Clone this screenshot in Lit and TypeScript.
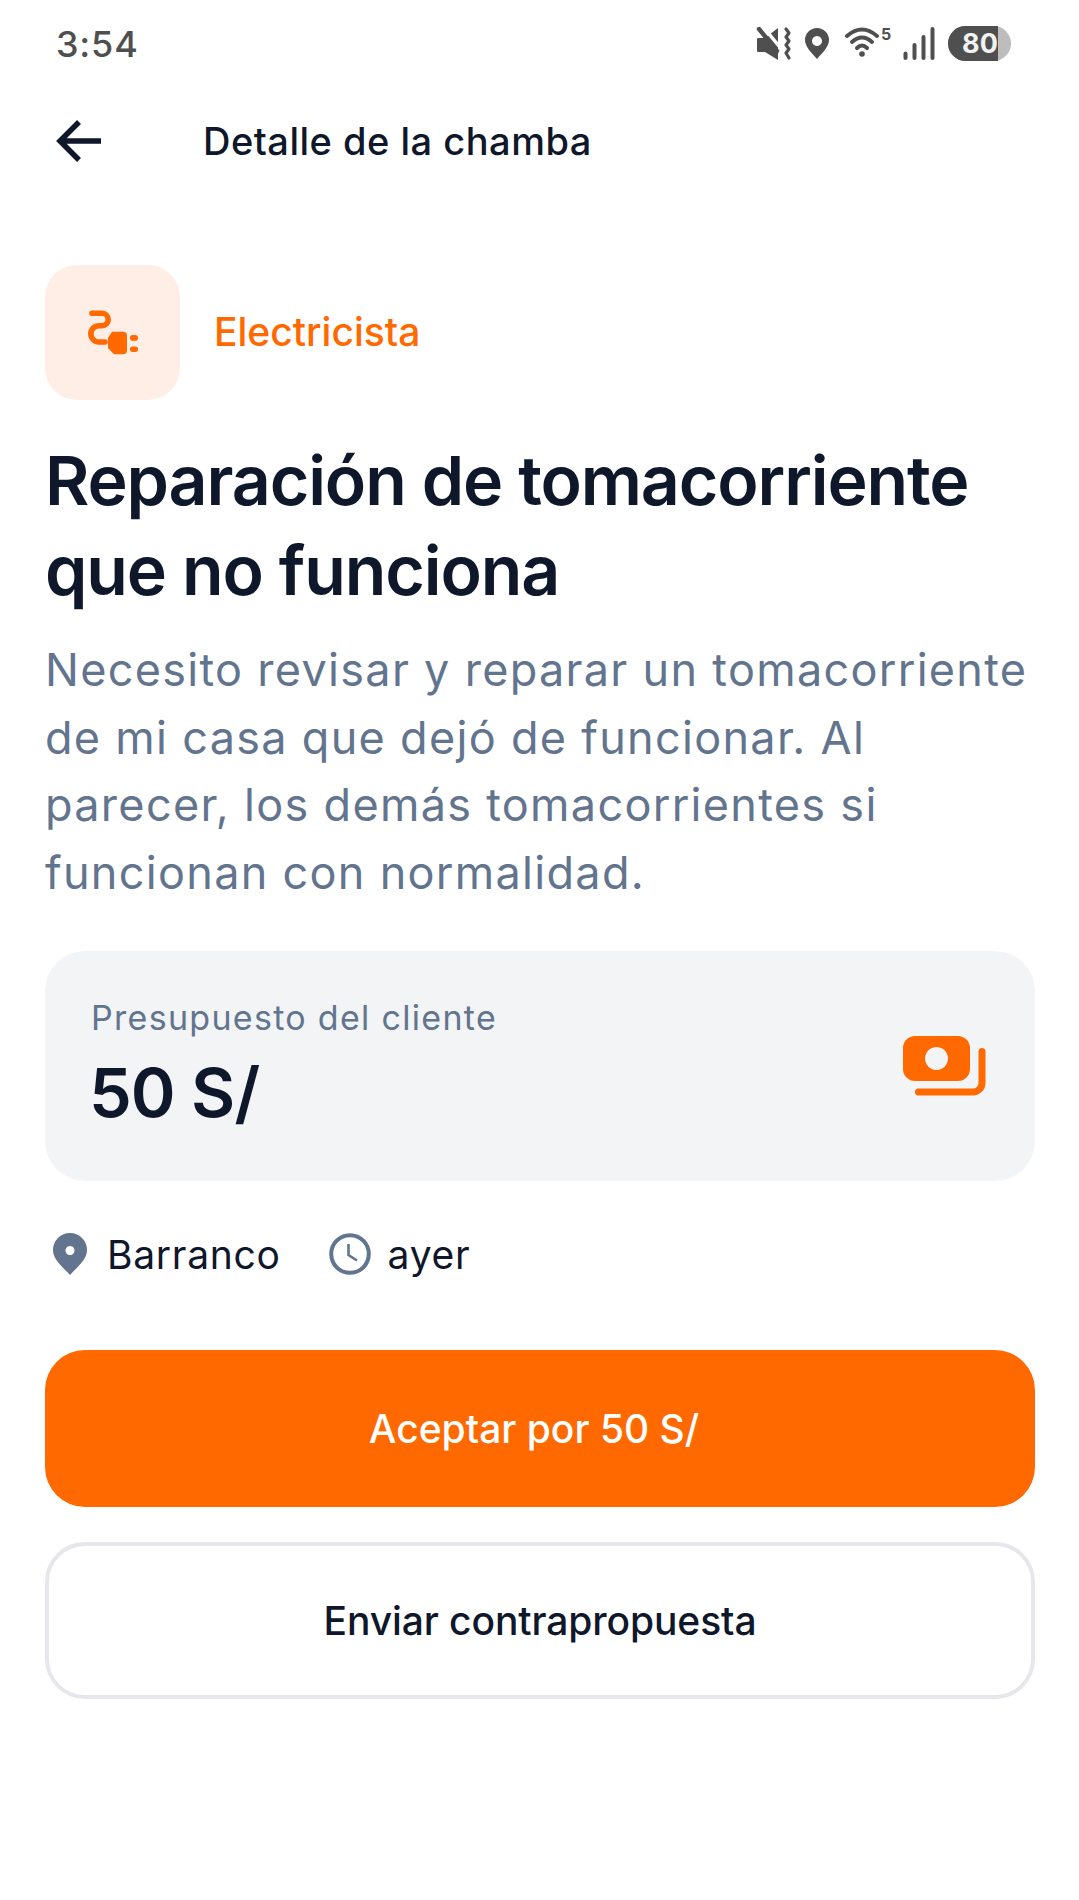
import { LitElement, html, css } from 'lit';
import { customElement } from 'lit/decorators.js';

const ORANGE = '#ff6900';
const SLATE = '#62748e';
const GREY = '#4f4f4f';

@customElement('app-root')
export class AppRoot extends LitElement {
  static styles = css`
    :host {
      display: block;
      width: 1079px;
      height: 1900px;
      background: #fff;
      font-family: Inter, "Liberation Sans", sans-serif;
      color: #0f172b;
      overflow: hidden;
    }
    svg { display: block; flex: none; }
    .status {
      display: flex;
      align-items: center;
      justify-content: space-between;
      height: 44px;
      padding: 22px 68px 0 56px;
      color: #4f4f4f;
    }
    .time { font-size: 36px; font-weight: 500; letter-spacing: 0.8px; }
    .appbar {
      display: flex;
      align-items: center;
      height: 70px;
      margin-top: 40px;
      padding-left: 56px;
    }
    .appbar h1 {
      margin: 0 0 0 101px;
      font-size: 38px;
      font-weight: 500;
      letter-spacing: 0.5px;
      line-height: 46px;
    }
    .content { padding: 89px 31px 0 45px; }
    .category { display: flex; align-items: center; gap: 34px; }
    .category-icon {
      width: 135px;
      height: 135px;
      border-radius: 32px;
      background: #ffeee5;
      display: flex;
      align-items: center;
      justify-content: center;
    }
    .category-name { color: #ff6900; font-size: 39px; font-weight: 500; padding-bottom: 2px; }
    h2 {
      margin: 35px 0 0;
      font-size: 68px;
      font-weight: 600;
      letter-spacing: -1.1px;
      line-height: 90px;
    }
    .desc {
      margin: 21px 0 0;
      font-size: 45px;
      line-height: 67.5px;
      letter-spacing: 1.3px;
      color: #62748e;
    }
    .budget {
      display: flex;
      align-items: center;
      justify-content: space-between;
      height: 230px;
      box-sizing: border-box;
      width: 990px;
      margin-top: 45px;
      padding: 0 48px 0 46px;
      border-radius: 40px;
      background: #f2f4f6;
    }
    .budget-text { padding-bottom: 3px; }
    .budget-label { font-size: 34px; letter-spacing: 1.3px; color: #62748e; }
    .budget-value {
      font-size: 68px;
      font-weight: 600;
      letter-spacing: -0.9px;
      line-height: 80px;
      margin: 14px 0 0 -2px;
    }
    .meta {
      display: flex;
      align-items: center;
      margin-top: 43px;
      padding-left: 8px;
      font-size: 39px;
      letter-spacing: 0.7px;
      height: 60px;
    }
    .meta-item { display: flex; align-items: center; }
    .meta-item + .meta-item { margin-left: 48px; }
    .pin { margin-right: 20px; }
    .clock { margin-right: 17px; }
    .actions {
      display: flex;
      flex-direction: column;
      gap: 35px;
      width: 990px;
      margin-top: 66px;
    }
    .btn {
      display: flex;
      align-items: center;
      justify-content: center;
      height: 157px;
      box-sizing: border-box;
      border-radius: 40px;
      font-size: 39px;
      font-weight: 500;
    }
    .btn.primary { background: #ff6900; color: #fff; padding-right: 12px; }
    .btn.secondary { border: 4px solid #e5e7eb; background: #fff; letter-spacing: -0.1px; }
  `;

  private statusIcons() {
    return html`<svg width="255" height="40" viewBox="0 0 255 40">
      <!-- muted + vibrate -->
      <path d="M1 15 Q1 14 2 14 H9 L22 4 V36 L9 28 H2 Q1 28 1 27z" fill="${GREY}"/>
      <path d="M6.5 2 L25 24.5" stroke="#fff" stroke-width="3.5"/>
      <path d="M3 5 L21 27" stroke="${GREY}" stroke-width="4.4" stroke-linecap="round"/>
      <path d="M30 5 L33 9 L30 13 L33 17 L30 21 L33 25 L30 29 L33 34" fill="none" stroke="${GREY}" stroke-width="3.2" stroke-linecap="round" stroke-linejoin="round"/>
      <!-- location -->
      <path fill-rule="evenodd" d="M61 35 C56 29 49 23 49 16 a12 12 0 0 1 24 0 C73 23 66 29 61 35z M61 12 a5 5 0 1 0 0.01 0z" fill="${GREY}"/>
      <!-- wifi -->
      <path d="M91 12 Q106 -1 121 12" fill="none" stroke="${GREY}" stroke-width="4" stroke-linecap="round"/>
      <path d="M96 18 Q106 9 116 18" fill="none" stroke="${GREY}" stroke-width="4" stroke-linecap="round"/>
      <path d="M101 24 Q106 19 111 24" fill="none" stroke="${GREY}" stroke-width="4" stroke-linecap="round"/>
      <circle cx="106" cy="30" r="2.8" fill="${GREY}"/>
      <text x="125" y="16" font-size="16" font-weight="700" fill="${GREY}" font-family="Inter, sans-serif">5</text>
      <!-- signal -->
      <rect x="147.5" y="27.5" width="4" height="8.5" rx="2" fill="${GREY}"/>
      <rect x="156.5" y="19" width="4" height="17" rx="2" fill="${GREY}"/>
      <rect x="165.5" y="11" width="4" height="25" rx="2" fill="${GREY}"/>
      <rect x="174.5" y="3" width="4" height="33" rx="2" fill="${GREY}"/>
      <!-- battery -->
      <rect x="192" y="2" width="63" height="35" rx="17.5" fill="#bdbdbd"/>
      <path d="M209.5 2 H242 V37 H209.5 A17.5 17.5 0 0 1 209.5 2z" fill="${GREY}"/>
      <text x="224" y="28.5" text-anchor="middle" font-size="27" font-weight="700" fill="#f2f2f2" font-family="Inter, sans-serif">80</text>
    </svg>`;
  }

  render() {
    return html`
      <div class="status">
        <span class="time">3:54</span>
        ${this.statusIcons()}
      </div>
      <div class="appbar">
        <svg width="46" height="46" viewBox="0 0 46 46" fill="none" stroke="#0f172b" stroke-width="5.5">
          <path d="M45 23 H4 M23 4 L4 23 L23 42"/>
        </svg>
        <h1>Detalle de la chamba</h1>
      </div>
      <div class="content">
        <div class="category">
          <div class="category-icon">
            <svg width="52" height="45" viewBox="0 0 52 45">
              <path d="M5 3.3 H15 A6.2 6.2 0 0 1 15 15.7 H12 A8 8 0 0 0 12 32 H18" fill="none" stroke="${ORANGE}" stroke-width="5.6" stroke-linecap="round"/>
              <path d="M25 21.7 H36 A4 4 0 0 1 40 25.7 V40.3 A4 4 0 0 1 36 44.3 H27 L21 38 V28z" fill="${ORANGE}"/>
              <rect x="43" y="25" width="8" height="5.7" rx="2.8" fill="${ORANGE}"/>
              <rect x="43" y="36.5" width="8" height="5.4" rx="2.7" fill="${ORANGE}"/>
            </svg>
          </div>
          <div class="category-name">Electricista</div>
        </div>
        <h2>Reparación de tomacorriente que no funciona</h2>
        <p class="desc">Necesito revisar y reparar un tomacorriente de mi casa que dejó de funcionar. Al parecer, los demás tomacorrientes si funcionan con normalidad.</p>
        <div class="budget">
          <div class="budget-text">
            <div class="budget-label">Presupuesto del cliente</div>
            <div class="budget-value">50 S/</div>
          </div>
          <svg width="84" height="60" viewBox="0 0 84 60">
            <path fill-rule="evenodd" d="M12 0 H55 A12 12 0 0 1 67 12 V33 A12 12 0 0 1 55 45 H12 A12 12 0 0 1 0 33 V12 A12 12 0 0 1 12 0z M33.5 11 a11.5 11.5 0 1 0 0.01 0z" fill="${ORANGE}"/>
            <path d="M79 15.5 V47 A9 9 0 0 1 70 56 H15.5" fill="none" stroke="${ORANGE}" stroke-width="7" stroke-linecap="round"/>
          </svg>
        </div>
        <div class="meta">
          <div class="meta-item">
            <svg class="pin" width="34" height="42" viewBox="0 0 34 42">
              <path fill-rule="evenodd" d="M17 42 C10 34 0 27 0 17 a17 17 0 0 1 34 0 C34 27 24 34 17 42z M17 13 a4.5 4.5 0 1 0 0.01 0z" fill="${SLATE}"/>
            </svg>
            <span>Barranco</span>
          </div>
          <div class="meta-item">
            <svg class="clock" width="42" height="42" viewBox="0 0 42 42" fill="none" stroke="${SLATE}">
              <circle cx="21" cy="21" r="18.8" stroke-width="4"/>
              <path d="M19.5 11 V22 L28 27.5" stroke-width="2.6"/>
            </svg>
            <span>ayer</span>
          </div>
        </div>
        <div class="actions">
          <div class="btn primary">Aceptar por 50 S/</div>
          <div class="btn secondary">Enviar contrapropuesta</div>
        </div>
      </div>
    `;
  }
}
